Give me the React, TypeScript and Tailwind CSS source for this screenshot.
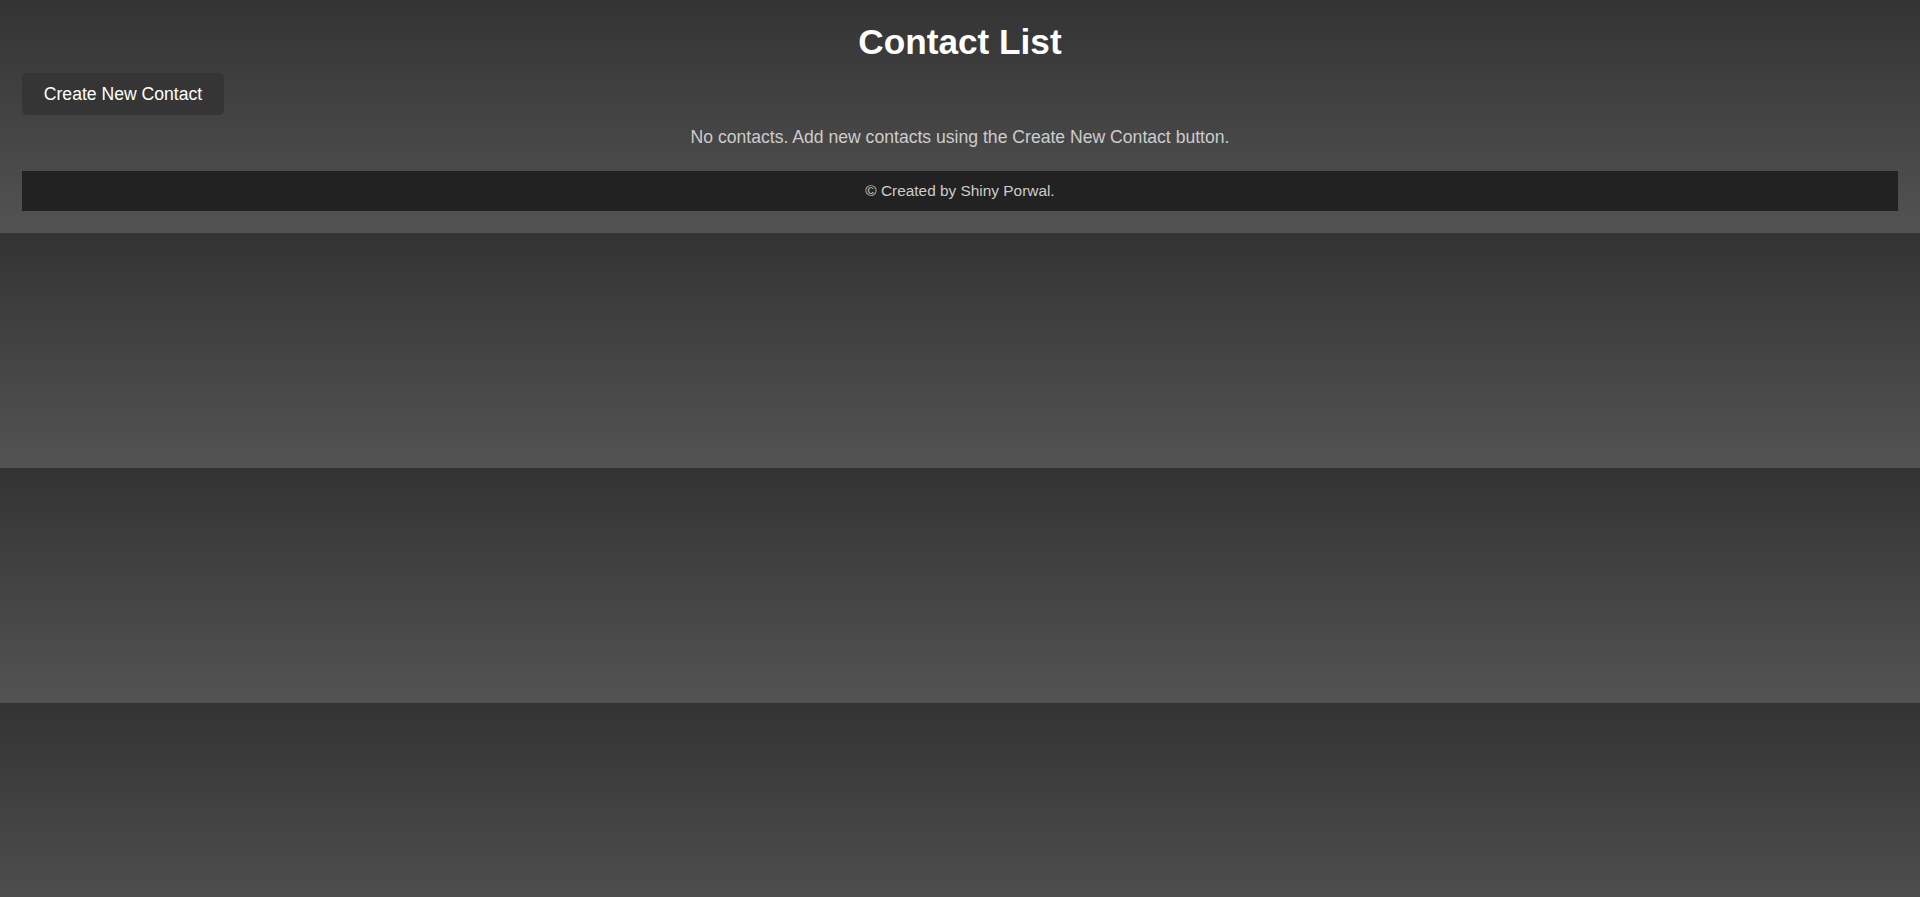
import React from "react";

export default function App() {
  return (
    <div
      className="min-h-screen w-full bg-[linear-gradient(to_bottom,#333333,#535353)] bg-[length:100%_235px] bg-[position:0_-2px] bg-repeat"
      style={{ fontFamily: '"Liberation Sans", Arial, sans-serif' }}
    >
      <div className="flex flex-col px-[22px] pt-[22px] pb-[22px]">
        <h1 className="m-0 text-center text-[35.2px] leading-[40px] font-bold text-white">
          Contact List
        </h1>
        <div className="mt-[11px] flex">
          <button className="h-[42px] w-[202px] rounded-[5px] bg-[#353535] text-[17.6px] text-white leading-[20px]">
            Create New Contact
          </button>
        </div>
        <p className="mt-[12px] text-center text-[17.6px] leading-[20px] text-[#cccccc]">
          No contacts. Add new contacts using the Create New Contact button.
        </p>
        <footer className="mt-[24px] flex h-[40px] items-center justify-center bg-[#222222] text-[15.4px] text-[#cccccc]">
          © Created by Shiny Porwal.
        </footer>
      </div>
    </div>
  );
}
